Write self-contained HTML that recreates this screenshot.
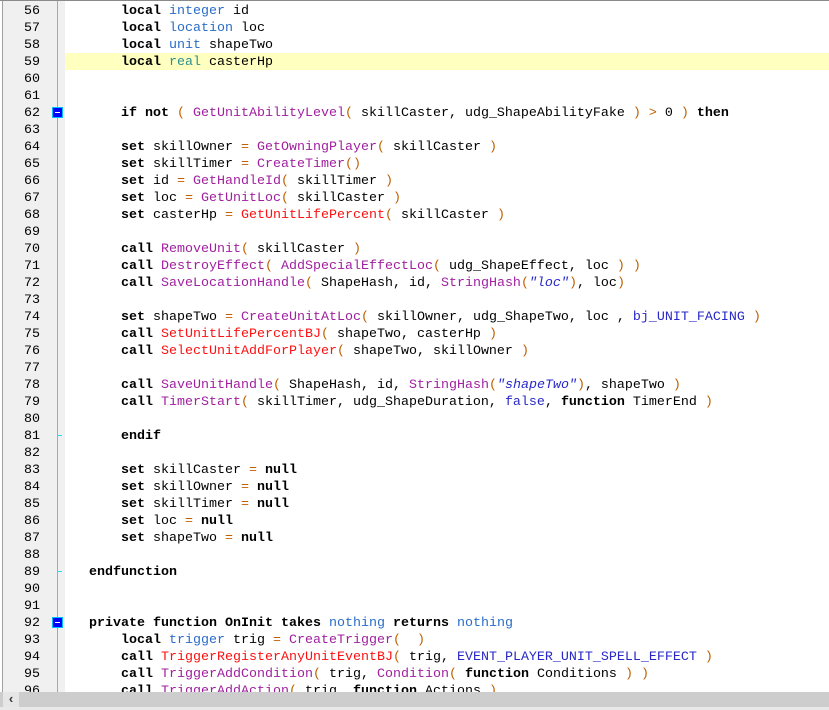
<!DOCTYPE html>
<html><head><meta charset="utf-8"><style>
body{margin:0;width:829px;height:710px;overflow:hidden;background:#fff;position:relative;font-family:"Liberation Mono","Courier New",monospace;font-size:13.33px;}
.topb{position:absolute;left:0;top:0;width:829px;height:1px;background:#8a8a8a}
.gut{position:absolute;left:2px;top:1px;width:62px;height:691px;background:#f0f0f0;border-left:1px solid #a0a0a0}
.cy{position:absolute;left:57px;top:1px;width:1px;height:691px;background:#20e0f0}
.hl{position:absolute;left:65px;top:53px;width:764px;height:17px;background:#ffffc0}
.w{position:absolute;left:0;top:1px;width:829px;height:691px;overflow:hidden}
.ln{position:absolute;left:10px;width:30px;text-align:right;color:#000;line-height:17px;height:17px}
.c{position:absolute;left:65px;white-space:pre;line-height:17px;height:17px;color:#000}
b{font-weight:bold;color:#000}
.t{color:#2a6cc8}.r{color:#2a9090}.f{color:#a020a0}.x{color:#ff1010}.p{color:#c06000}.k{color:#2828c8}.s{color:#2828c8;font-style:italic}
.fold{position:absolute;left:52px;width:9px;height:9px;background:#0000ff;border:1px solid #00c0ff}
.fold::after{content:"";position:absolute;left:2px;top:4px;width:5px;height:1px;background:#fff}
.tick{position:absolute;left:58px;width:4px;height:1px;background:#20e0f0}
.sb{position:absolute;left:0;top:692px;width:829px;height:15px;background:#cdcdcd}
.sbb{position:absolute;left:0;top:707px;width:829px;height:3px;background:#e8e8e8}
.arr{position:absolute;left:3px;top:692px;width:16px;height:15px;background:#e6e6e6;font-family:"Liberation Sans",sans-serif;font-size:13px;font-weight:bold;line-height:14px;text-align:center;color:#333}
</style></head><body>
<div class="topb"></div>
<div class="gut"></div>
<div class="cy"></div>
<div class="hl"></div>
<div class="fold" style="top:107px"></div>
<div class="fold" style="top:617px"></div>
<div class="tick" style="top:435px"></div>
<div class="tick" style="top:571px"></div>
<div class="w">
<div class="ln" style="top:2px">56</div><div class="c" style="top:2px">       <b>local</b> <span class="t">integer</span> id</div>
<div class="ln" style="top:19px">57</div><div class="c" style="top:19px">       <b>local</b> <span class="t">location</span> loc</div>
<div class="ln" style="top:36px">58</div><div class="c" style="top:36px">       <b>local</b> <span class="t">unit</span> shapeTwo</div>
<div class="ln" style="top:53px">59</div><div class="c" style="top:53px">       <b>local</b> <span class="r">real</span> casterHp</div>
<div class="ln" style="top:70px">60</div>
<div class="ln" style="top:87px">61</div>
<div class="ln" style="top:104px">62</div><div class="c" style="top:104px">       <b>if not</b> <span class="p">(</span> <span class="f">GetUnitAbilityLevel</span><span class="p">(</span> skillCaster, udg_ShapeAbilityFake <span class="p">)</span> <span class="p">&gt;</span> 0 <span class="p">)</span> <b>then</b></div>
<div class="ln" style="top:121px">63</div>
<div class="ln" style="top:138px">64</div><div class="c" style="top:138px">       <b>set</b> skillOwner <span class="p">=</span> <span class="f">GetOwningPlayer</span><span class="p">(</span> skillCaster <span class="p">)</span></div>
<div class="ln" style="top:155px">65</div><div class="c" style="top:155px">       <b>set</b> skillTimer <span class="p">=</span> <span class="f">CreateTimer</span><span class="p">()</span></div>
<div class="ln" style="top:172px">66</div><div class="c" style="top:172px">       <b>set</b> id <span class="p">=</span> <span class="f">GetHandleId</span><span class="p">(</span> skillTimer <span class="p">)</span></div>
<div class="ln" style="top:189px">67</div><div class="c" style="top:189px">       <b>set</b> loc <span class="p">=</span> <span class="f">GetUnitLoc</span><span class="p">(</span> skillCaster <span class="p">)</span></div>
<div class="ln" style="top:206px">68</div><div class="c" style="top:206px">       <b>set</b> casterHp <span class="p">=</span> <span class="x">GetUnitLifePercent</span><span class="p">(</span> skillCaster <span class="p">)</span></div>
<div class="ln" style="top:223px">69</div>
<div class="ln" style="top:240px">70</div><div class="c" style="top:240px">       <b>call</b> <span class="f">RemoveUnit</span><span class="p">(</span> skillCaster <span class="p">)</span></div>
<div class="ln" style="top:257px">71</div><div class="c" style="top:257px">       <b>call</b> <span class="f">DestroyEffect</span><span class="p">(</span> <span class="f">AddSpecialEffectLoc</span><span class="p">(</span> udg_ShapeEffect, loc <span class="p">)</span> <span class="p">)</span></div>
<div class="ln" style="top:274px">72</div><div class="c" style="top:274px">       <b>call</b> <span class="f">SaveLocationHandle</span><span class="p">(</span> ShapeHash, id, <span class="f">StringHash</span><span class="p">(</span><span class="s">"loc"</span><span class="p">)</span>, loc<span class="p">)</span></div>
<div class="ln" style="top:291px">73</div>
<div class="ln" style="top:308px">74</div><div class="c" style="top:308px">       <b>set</b> shapeTwo <span class="p">=</span> <span class="f">CreateUnitAtLoc</span><span class="p">(</span> skillOwner, udg_ShapeTwo, loc , <span class="k">bj_UNIT_FACING</span> <span class="p">)</span></div>
<div class="ln" style="top:325px">75</div><div class="c" style="top:325px">       <b>call</b> <span class="x">SetUnitLifePercentBJ</span><span class="p">(</span> shapeTwo, casterHp <span class="p">)</span></div>
<div class="ln" style="top:342px">76</div><div class="c" style="top:342px">       <b>call</b> <span class="x">SelectUnitAddForPlayer</span><span class="p">(</span> shapeTwo, skillOwner <span class="p">)</span></div>
<div class="ln" style="top:359px">77</div>
<div class="ln" style="top:376px">78</div><div class="c" style="top:376px">       <b>call</b> <span class="f">SaveUnitHandle</span><span class="p">(</span> ShapeHash, id, <span class="f">StringHash</span><span class="p">(</span><span class="s">"shapeTwo"</span><span class="p">)</span>, shapeTwo <span class="p">)</span></div>
<div class="ln" style="top:393px">79</div><div class="c" style="top:393px">       <b>call</b> <span class="f">TimerStart</span><span class="p">(</span> skillTimer, udg_ShapeDuration, <span class="k">false</span>, <b>function</b> TimerEnd <span class="p">)</span></div>
<div class="ln" style="top:410px">80</div>
<div class="ln" style="top:427px">81</div><div class="c" style="top:427px">       <b>endif</b></div>
<div class="ln" style="top:444px">82</div>
<div class="ln" style="top:461px">83</div><div class="c" style="top:461px">       <b>set</b> skillCaster <span class="p">=</span> <b>null</b></div>
<div class="ln" style="top:478px">84</div><div class="c" style="top:478px">       <b>set</b> skillOwner <span class="p">=</span> <b>null</b></div>
<div class="ln" style="top:495px">85</div><div class="c" style="top:495px">       <b>set</b> skillTimer <span class="p">=</span> <b>null</b></div>
<div class="ln" style="top:512px">86</div><div class="c" style="top:512px">       <b>set</b> loc <span class="p">=</span> <b>null</b></div>
<div class="ln" style="top:529px">87</div><div class="c" style="top:529px">       <b>set</b> shapeTwo <span class="p">=</span> <b>null</b></div>
<div class="ln" style="top:546px">88</div>
<div class="ln" style="top:563px">89</div><div class="c" style="top:563px">   <b>endfunction</b></div>
<div class="ln" style="top:580px">90</div>
<div class="ln" style="top:597px">91</div>
<div class="ln" style="top:614px">92</div><div class="c" style="top:614px">   <b>private function</b> <b>OnInit</b> <b>takes</b> <span class="t">nothing</span> <b>returns</b> <span class="t">nothing</span></div>
<div class="ln" style="top:631px">93</div><div class="c" style="top:631px">       <b>local</b> <span class="t">trigger</span> trig <span class="p">=</span> <span class="f">CreateTrigger</span><span class="p">(</span>  <span class="p">)</span></div>
<div class="ln" style="top:648px">94</div><div class="c" style="top:648px">       <b>call</b> <span class="x">TriggerRegisterAnyUnitEventBJ</span><span class="p">(</span> trig, <span class="k">EVENT_PLAYER_UNIT_SPELL_EFFECT</span> <span class="p">)</span></div>
<div class="ln" style="top:665px">95</div><div class="c" style="top:665px">       <b>call</b> <span class="f">TriggerAddCondition</span><span class="p">(</span> trig, <span class="f">Condition</span><span class="p">(</span> <b>function</b> Conditions <span class="p">)</span> <span class="p">)</span></div>
<div class="ln" style="top:682px">96</div><div class="c" style="top:682px">       <b>call</b> <span class="f">TriggerAddAction</span><span class="p">(</span> trig, <b>function</b> Actions <span class="p">)</span></div>
</div>
<div class="sb"></div>
<div class="sbb"></div>
<div class="arr">&lsaquo;</div>
</body></html>
